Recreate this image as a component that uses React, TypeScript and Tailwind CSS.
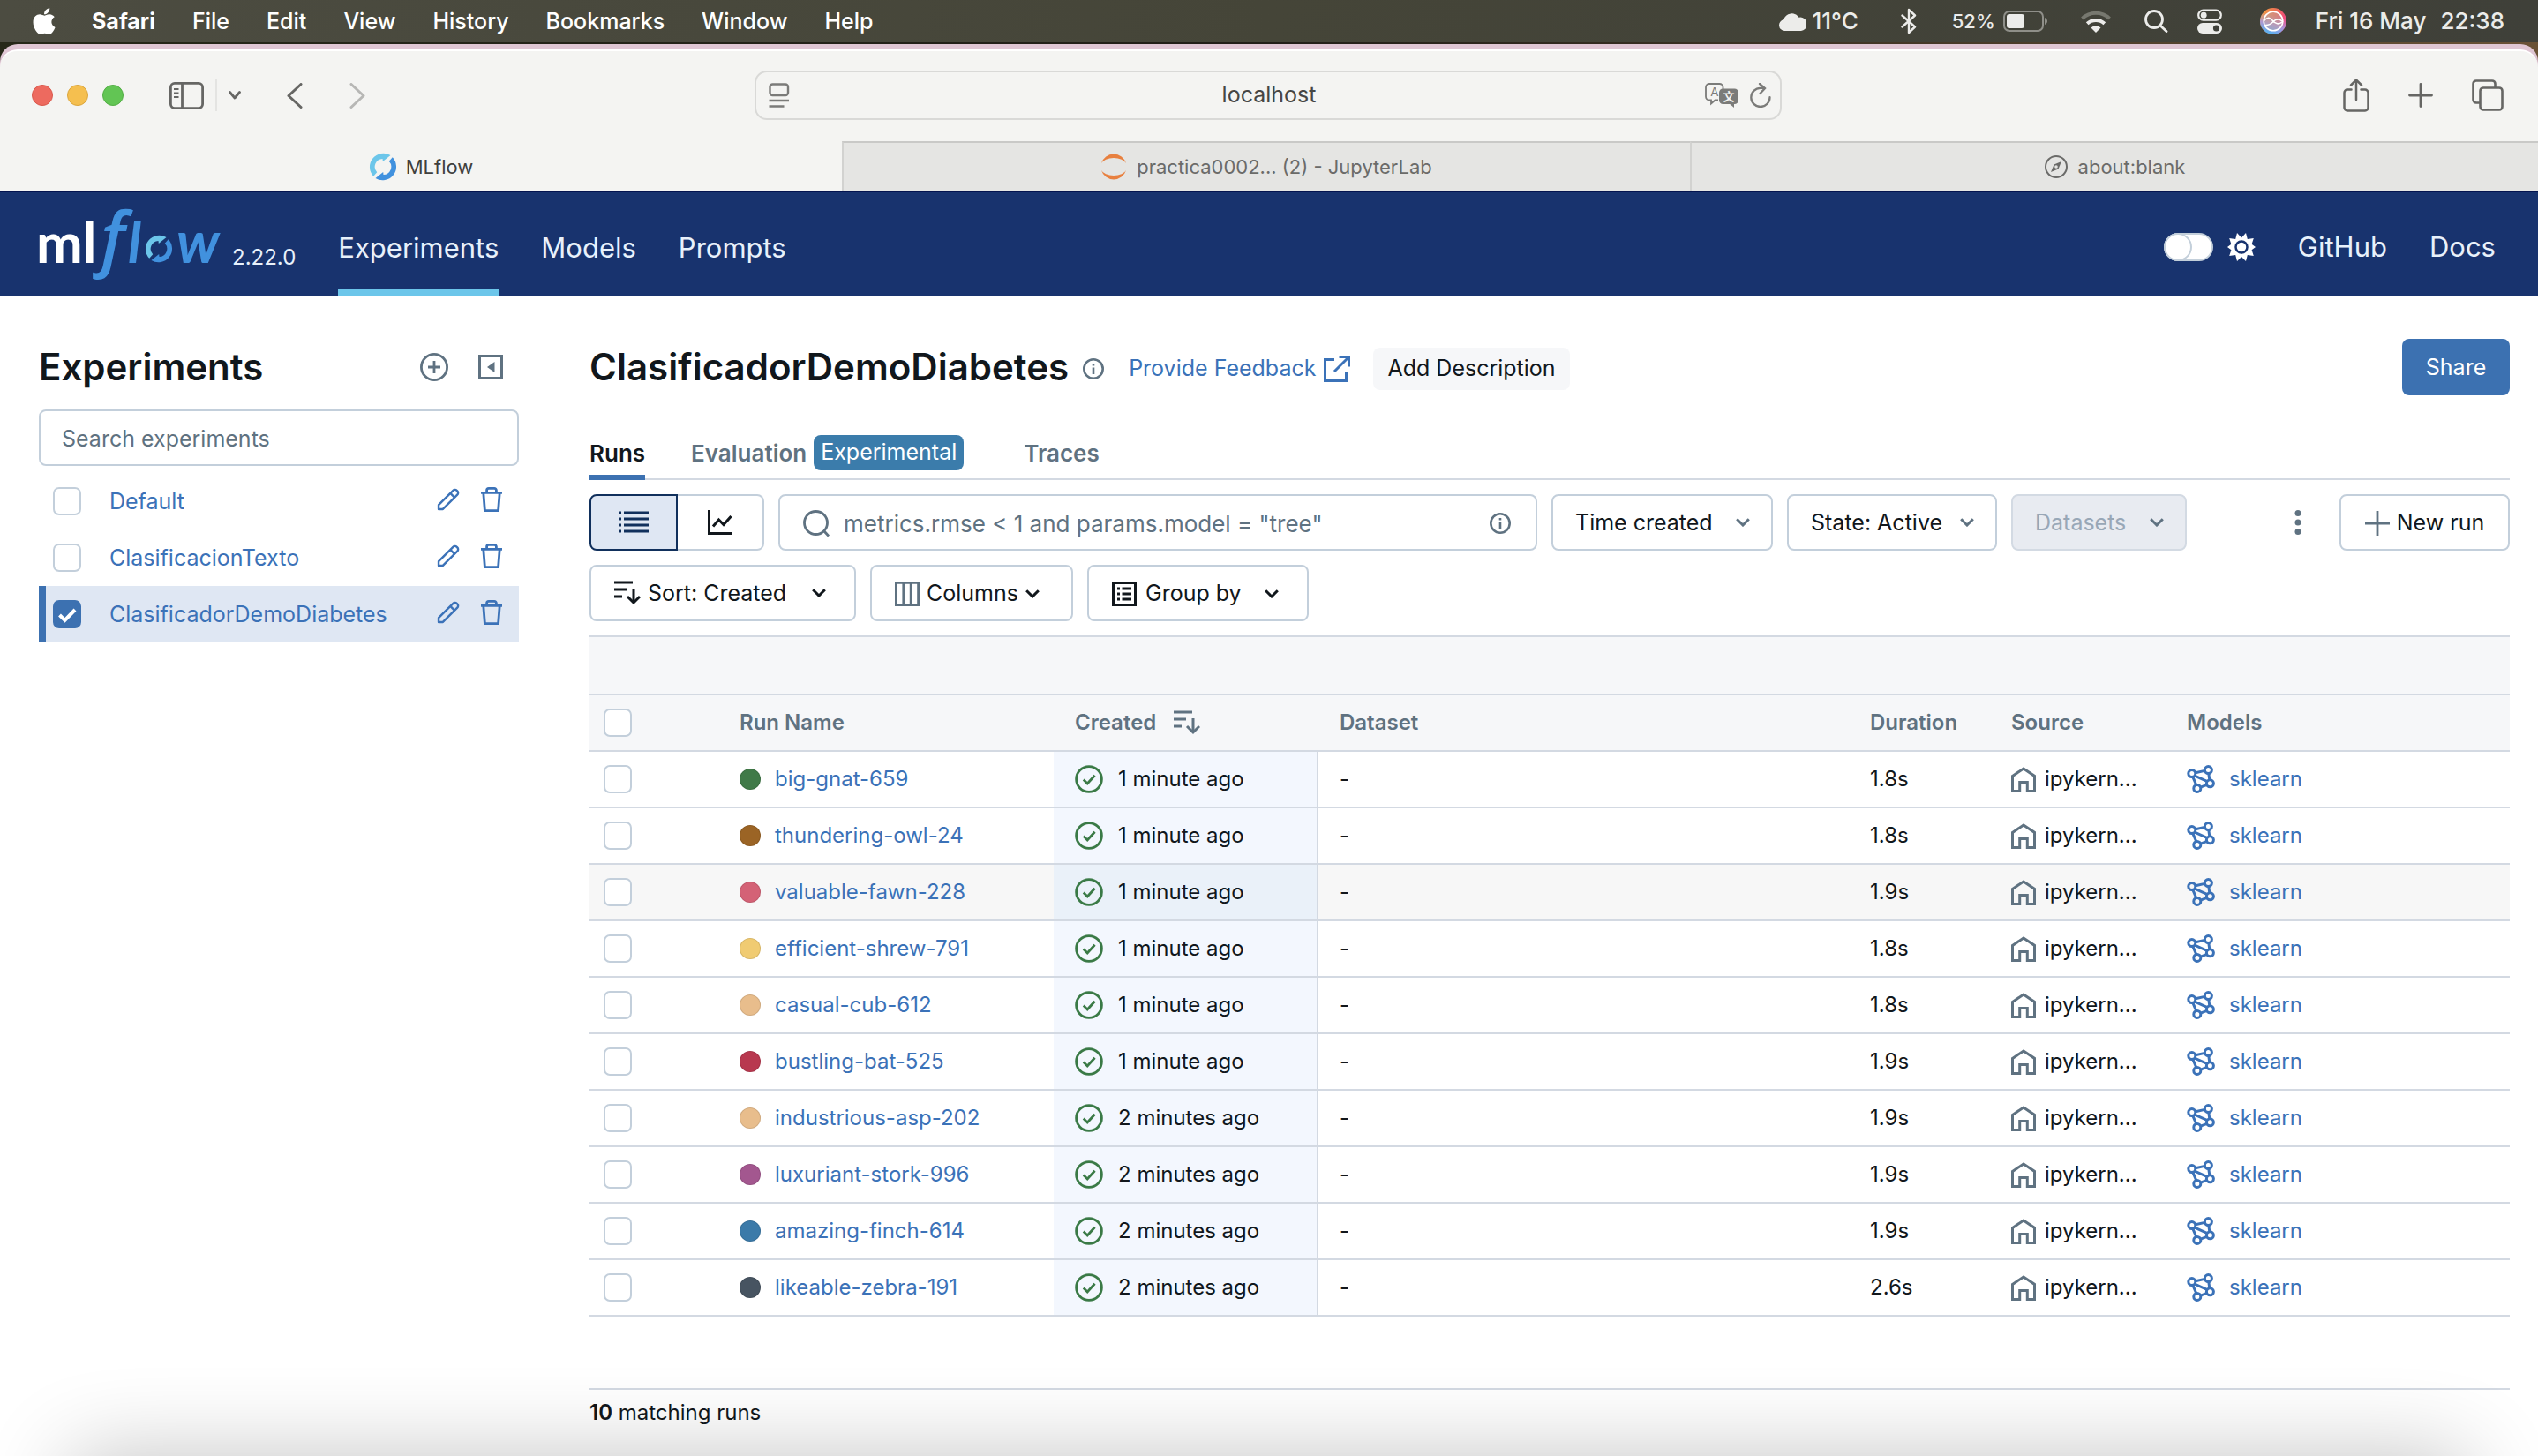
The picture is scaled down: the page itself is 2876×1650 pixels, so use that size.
import type { ReactNode } from "react";
import { FaApple } from "react-icons/fa";

type IconProps = { className?: string };

const Chevron = ({ className = "text-[#5f7281]" }: IconProps) => (
  <svg viewBox="0 0 16 10" className={`h-[10px] w-4 shrink-0 ${className}`} fill="none" stroke="currentColor" strokeWidth="3">
    <path d="M1.2 1.2 8 8l6.8-6.8" />
  </svg>
);

const InfoIcon = ({ className = "" }: IconProps) => (
  <svg viewBox="0 0 24 24" className={`size-6 shrink-0 text-[#5f7281] ${className}`} fill="none" stroke="currentColor" strokeWidth="2.6">
    <circle cx="12" cy="12" r="10.7" />
    <path d="M12 10.5V18M12 6v2.6" />
  </svg>
);

const PencilIcon = () => (
  <svg viewBox="0 0 28 28" className="size-[26px]" fill="none" stroke="currentColor" strokeWidth="2.6" strokeLinejoin="round">
    <path d="M2.2 25.8v-5.2L19.8 3a3.2 3.2 0 0 1 4.6 0l.6.6a3.2 3.2 0 0 1 0 4.6L7.4 25.8Z" />
    <path d="m16.5 6.4 5.2 5.2" />
  </svg>
);

const TrashIcon = () => (
  <svg viewBox="0 0 26 30" className="h-[30px] w-[26px]" fill="none" stroke="currentColor" strokeWidth="2.8">
    <path d="M1 7.4h24M7.6 7V4.6a2.2 2.2 0 0 1 2.2-2.2h6.4a2.2 2.2 0 0 1 2.2 2.2V7M3.8 7.6l1.6 20h15.2l1.6-20" />
  </svg>
);

const SortIcon = () => (
  <svg viewBox="0 0 30 28" className="h-7 w-[30px] shrink-0" fill="none" stroke="currentColor" strokeWidth="3">
    <path d="M0 2h21M0 10h14M0 18h9M22 9v15.5" />
    <path d="m15 18 7 7 7-7" />
  </svg>
);

const CheckCircle = () => (
  <svg viewBox="0 0 16 16" className="size-8 shrink-0 text-[#3a7a46]" fill="none" stroke="currentColor" strokeWidth="1.4">
    <circle cx="8" cy="8" r="7.2" />
    <path d="m4.9 8.3 2.2 2.2 4.2-4.6" />
  </svg>
);

const HomeIcon = () => (
  <svg viewBox="0 0 28 29" className="h-[29px] w-7 shrink-0 text-[#5f7281]" fill="none" stroke="currentColor" strokeWidth="3">
    <path d="M1.5 10.4 14 2l12.5 8.4v17H18.3V17.5H9.7v9.9H1.5Z" />
  </svg>
);

const ModelIcon = () => (
  <svg viewBox="0 0 16 16" className="size-8 shrink-0" fill="none" stroke="currentColor" strokeWidth="1.5">
    <circle cx="2.9" cy="4.8" r="2" />
    <circle cx="12.2" cy="2.8" r="2" />
    <circle cx="13.2" cy="10.4" r="2" />
    <circle cx="5.9" cy="13.2" r="2" />
    <path d="m4.9 4.4 5.3-1.2M12.4 4.8l.5 3.6M11.5 11.2l-3.7 1.4M3.4 6.7l2 4.6M4.5 6.1l7.2 3.2" />
  </svg>
);

const SwirlPaths = () => (
  <>
    <path fill="#6cc6ea" d="M5.2 26.8A15.5 15.5 0 0 1 24.5 2.9L15.8 9.9 15.5 7A9 9 0 0 0 9.2 22.2Z" />
    <path fill="#4191de" d="M26.8 5.2A15.5 15.5 0 0 1 7.5 29.1l8.7-7 .3 2.9A9 9 0 0 0 22.8 9.8Z" />
  </>
);

function MenuBar() {
  return (
    <nav className="flex h-12 items-center bg-linear-to-r from-[#4c4c41] via-[#454538] to-[#3f4039] pr-[38px] pl-9 text-[26px] leading-none font-medium text-white">
      <FaApple className="h-[34px] w-[28px]" />
      <div className="ml-10 flex grow items-center gap-[42px] text-[25px]">
        <b className="font-bold">Safari</b>
        {["File", "Edit", "View", "History", "Bookmarks", "Window", "Help"].map((m) => (
          <span key={m}>{m}</span>
        ))}
      </div>
      <div className="flex items-center text-[#ececea]">
        <svg viewBox="0 0 31 21" className="mr-[7px] h-[21px] w-[31px]" fill="currentColor">
          <path d="M6.5 21a6.4 6.4 0 0 1-1.2-12.7A9.5 9.5 0 0 1 22.5 5.8 7.7 7.7 0 1 1 23.5 21Z" />
        </svg>
        <span>11°C</span>
        <svg viewBox="0 0 18 30" className="ml-12 h-[30px] w-[18px]" fill="none" stroke="currentColor" strokeWidth="2.4" strokeLinejoin="round" strokeLinecap="round">
          <path d="m1.5 8.5 14.5 13L9 28V2l7 6.5-14.5 13" />
        </svg>
        <span className="ml-10 text-[22px]">52%</span>
        <svg viewBox="0 0 50 24" className="ml-[9px] h-6 w-[50px]">
          <rect x="1" y="1" width="44" height="22" rx="6" fill="none" stroke="#8f8f89" strokeWidth="2" />
          <rect x="4" y="4" width="20" height="16" rx="3" fill="#ececea" />
          <path d="M47 8c4 1.5 4 6.5 0 8Z" fill="#8f8f89" />
        </svg>
        <svg viewBox="0 0 34 25" className="ml-[38px] h-[25px] w-[34px]" fill="none" strokeWidth="4">
          <path d="M1.5 9a22.5 22.5 0 0 1 31 0" stroke="#77786f" />
          <path d="M7.2 14.8a14.5 14.5 0 0 1 19.6 0" stroke="#ececea" />
          <path d="m17 25-5.5-5.6a8 8 0 0 1 11 0Z" fill="#ececea" />
        </svg>
        <svg viewBox="0 0 27 26" className="ml-[38px] h-[26px] w-[27px]" fill="none" stroke="currentColor" strokeWidth="2.8" strokeLinecap="round">
          <circle cx="11" cy="11" r="9.5" />
          <path d="m18.2 18.2 6.8 6.3" />
        </svg>
        <svg viewBox="0 0 28 28" className="ml-[33px] size-7">
          <rect x="1.2" y="1.7" width="25.6" height="11" rx="5.5" fill="none" stroke="#ececea" strokeWidth="2.2" />
          <circle cx="7.2" cy="7.2" r="3.4" fill="#ececea" />
          <rect x="0" y="16" width="28" height="12" rx="6" fill="#ececea" />
          <circle cx="21.5" cy="22" r="3.6" fill="#3f4039" />
        </svg>
        <svg viewBox="0 0 30 30" className="ml-[43px] size-[30px]">
          <defs>
            <linearGradient id="siri-ring" x1="0" y1="0.2" x2="1" y2="0.5">
              <stop offset="0" stopColor="#f0a040" />
              <stop offset="0.6" stopColor="#ee6a5a" />
              <stop offset="1" stopColor="#f0428a" />
            </linearGradient>
            <linearGradient id="siri-base" x1="0.6" y1="0.3" x2="0.4" y2="1">
              <stop offset="0" stopColor="#a9a0d8" stopOpacity="0" />
              <stop offset="0.5" stopColor="#a79be0" stopOpacity="0.9" />
              <stop offset="1" stopColor="#4db4f5" />
            </linearGradient>
          </defs>
          <circle cx="15" cy="15" r="15" fill="url(#siri-ring)" />
          <circle cx="15" cy="15" r="15" fill="url(#siri-base)" />
          <circle cx="15" cy="15" r="10.8" fill="#b9a9a8" fillOpacity="0.45" stroke="#fff" strokeWidth="1.6" />
          <path d="M4.5 14.5c4-5 7-3.5 10 0s6.5 5 11 1c-4-4-7-3.5-10.5 0s-6 4.5-9.5 4" fill="none" stroke="#fff" strokeWidth="1.6" />
        </svg>
        <span className="ml-[33px]">Fri 16 May</span>
        <span className="ml-4">22:38</span>
      </div>
    </nav>
  );
}

function SafariChrome() {
  return (
    <div className="bg-linear-to-r from-[#262818] via-[#221f18] to-[#6a5236] pt-0.5">
      <div className="rounded-t-[20px] bg-[#dfc6d3] pt-1.5">
        <div className="rounded-t-[20px] border-t-2 border-white bg-[#f4f4f2]">
          <div className="flex h-[102px] items-center pr-[39px] pb-0.5 pl-9 text-[#666664]">
            <div className="flex flex-1 items-center">
              <div className="flex gap-4">
                <i className="size-6 rounded-full border border-[#d9594d] bg-[#ed6a5f]" />
                <i className="size-6 rounded-full border border-[#dba63e] bg-[#f5bf4f]" />
                <i className="size-6 rounded-full border border-[#54ae46] bg-[#62c554]" />
              </div>
              <button aria-label="Sidebar" className="ml-[52px]">
                <svg viewBox="0 0 39 31" className="h-[31px] w-[39px]" fill="none" stroke="currentColor" strokeWidth="2.8">
                  <rect x="1.4" y="1.4" width="36.2" height="28.2" rx="4.5" />
                  <path d="M14.5 1.5v28" />
                  <path d="M5 8h5.5M5 12.5h5.5M5 17h5.5" strokeWidth="2" />
                </svg>
              </button>
              <i className="ml-[13px] h-9 w-0.5 bg-[#e4e4e2]" />
              <svg viewBox="0 0 14 10" className="ml-[13px] h-[10px] w-[14px]" fill="none" stroke="currentColor" strokeWidth="2.8" strokeLinecap="round" strokeLinejoin="round">
                <path d="m1.5 1.5 5.5 6.5 5.5-6.5" />
              </svg>
              <button aria-label="Back" className="ml-[52px]">
                <svg viewBox="0 0 18 29" className="h-[29px] w-[18px]" fill="none" stroke="currentColor" strokeWidth="3" strokeLinecap="round" strokeLinejoin="round">
                  <path d="M16 1.5 2 14.5l14 13" />
                </svg>
              </button>
              <button aria-label="Forward" className="ml-[53px] text-[#b7b7b5]">
                <svg viewBox="0 0 18 29" className="h-[29px] w-[18px]" fill="none" stroke="currentColor" strokeWidth="3" strokeLinecap="round" strokeLinejoin="round">
                  <path d="m2 1.5 14 13-14 13" />
                </svg>
              </button>
            </div>
            <div className="flex h-14 w-[1164px] items-center rounded-[14px] border-2 border-[#d9d9d7] pr-[10px] pl-[14px] text-[#7b7b79]">
              <svg viewBox="0 0 24 28" className="h-7 w-6" fill="none" stroke="currentColor" strokeWidth="2.4">
                <rect x="1.5" y="1.5" width="20.5" height="12.5" rx="3" />
                <path d="M.5 20h22.5M.5 26.5h17" />
              </svg>
              <input aria-label="Address" defaultValue="localhost" className="min-w-0 grow pl-[50px] text-center text-[25px] text-[#464644] outline-none" />
              <svg viewBox="0 0 38 28" className="h-7 w-[38px]">
                <path d="M15 19.5h-3.5L7 23.5v-4H5A4 4 0 0 1 1 15.5V5a4 4 0 0 1 4-4h11.5a4 4 0 0 1 4 4v2" fill="none" stroke="currentColor" strokeWidth="1.8" />
                <rect x="16" y="6.5" width="22" height="17.5" rx="4.5" fill="currentColor" />
                <path d="M27 23h6v5Z" fill="currentColor" />
                <text x="6.3" y="14.5" fontSize="13.5" fill="currentColor" fontFamily="Inter">A</text>
                <text x="20.5" y="20" fontSize="13" fontWeight="700" fill="#f4f4f2" fontFamily="Noto Sans CJK SC">文</text>
              </svg>
              <button aria-label="Reload" className="ml-[13px]">
                <svg viewBox="0 0 24 28" className="h-7 w-6" fill="none" stroke="currentColor" strokeWidth="2.3" strokeLinecap="round">
                  <path d="M22.5 16.2A10.6 10.6 0 1 1 12 5.8h4.5M11 1l6 5-5.5 6" />
                </svg>
              </button>
            </div>
            <div className="flex flex-1 items-center justify-end">
              <button aria-label="Share page">
                <svg viewBox="0 0 30 38" className="h-[38px] w-[30px]" fill="none" stroke="currentColor" strokeWidth="2.5" strokeLinecap="round">
                  <path d="M9.5 12.5H5a3.5 3.5 0 0 0-3.5 3.5v17A3.5 3.5 0 0 0 5 36.5h20a3.5 3.5 0 0 0 3.5-3.5V16a3.5 3.5 0 0 0-3.5-3.5h-4.5M15 24V2M9 7.5l6-6 6 6" />
                </svg>
              </button>
              <button aria-label="New tab" className="ml-[44px]">
                <svg viewBox="0 0 28 28" className="size-7" fill="none" stroke="currentColor" strokeWidth="2.8" strokeLinecap="round">
                  <path d="M14 1.5v25M1.5 14h25" />
                </svg>
              </button>
              <button aria-label="Tab overview" className="ml-[44px]">
                <svg viewBox="0 0 36 36" className="size-9" fill="none" stroke="currentColor" strokeWidth="2.6">
                  <path d="M9.5 26.5H5A3.5 3.5 0 0 1 1.5 23V5A3.5 3.5 0 0 1 5 1.5h18A3.5 3.5 0 0 1 26.5 5v4.5" />
                  <rect x="9.5" y="9.5" width="25" height="25" rx="3.5" />
                </svg>
              </button>
            </div>
          </div>
          <div className="grid h-14 grid-cols-[954fr_961fr_961fr] text-[22px] leading-none text-[#6b6b69]">
            <div className="flex items-center justify-center gap-[10px] pt-0.5 text-[#3f3f3d]">
              <svg viewBox="0 0 32 32" className="size-8"><SwirlPaths /></svg>
              MLflow
            </div>
            {["practica0002... (2) - JupyterLab", "about:blank"].map((t, i) => (
              <div key={t} className="flex items-center justify-center gap-3 border-t-2 border-l-2 border-t-[#c9c9c7] border-l-[#d2d2d0] bg-[#e5e5e3]">
                {i === 0 ? (
                  <svg viewBox="0 0 28 30" className="h-[30px] w-7" fill="#e8803f">
                    <path d="M0 11A14.6 14.6 0 0 1 28 11 14.5 8 0 0 0 0 11ZM0 19A14.6 14.6 0 0 0 28 19 14.5 8 0 0 1 0 19Z" />
                  </svg>
                ) : (
                  <svg viewBox="0 0 26 26" className="size-[26px]" fill="none" stroke="currentColor" strokeWidth="2">
                    <circle cx="13" cy="13" r="12" />
                    <path d="m19 7-3.5 8.5L7 19l3.5-8.5Z" fill="currentColor" stroke="none" />
                    <circle cx="13" cy="13" r="1.8" fill="#e5e5e3" stroke="none" />
                  </svg>
                )}
                {t}
              </div>
            ))}
          </div>
        </div>
      </div>
    </div>
  );
}

function MlflowHeader() {
  return (
    <header className="flex h-[120px] items-stretch border-t-2 border-[#04144f] bg-[#18336e] pr-12 pl-10 text-[31px] text-[#e8f1fb]">
      <a href="#home" aria-label="MLflow home">
        <svg viewBox="0 0 216 118" className="h-[118px] w-[216px] overflow-visible" fontFamily="Lato">
          <text x="1" y="80" fontSize="63" fontWeight="700" fill="#fff">ml</text>
          <text x="74" y="80" fontSize="80" fontStyle="italic" fontWeight="600" fontFamily="Open Sans" fill="#4191de">f</text>
          <text x="105" y="80" fontSize="63" fontStyle="italic" fontWeight="700" fill="#4191de">l</text>
          <text x="160" y="80" fontSize="66" fontStyle="italic" fontWeight="700" fill="#4191de">w</text>
          <svg x="124" y="48" width="32" height="32" viewBox="0 0 32 32"><SwirlPaths /></svg>
        </svg>
      </a>
      <span className="mt-[58px] ml-[7px] text-2xl leading-8">2.22.0</span>
      <nav className="ml-12 flex gap-12">
        <a href="#experiments" className="flex items-center border-b-8 border-[#6cc6ea] pt-4">Experiments</a>
        <a href="#models" className="flex items-center pt-2">Models</a>
        <a href="#prompts" className="flex items-center pt-2">Prompts</a>
      </nav>
      <div className="ml-auto flex items-center pt-1.5">
        <button role="switch" aria-checked="false" aria-label="Dark theme" className="flex h-8 w-14 rounded-full border-2 border-[#c3cfda] bg-white">
          <i className="-my-0.5 -ml-0.5 size-8 rounded-full border-2 border-[#c3cfda] bg-white" />
        </button>
        <svg viewBox="0 0 32 32" className="ml-4 size-8">
          <path fill="#fff" d="m16 5.5 5-5.5 1.8 7 7-.9-2.2 6.7L32 16l-4.4 3.2 2.2 6.7-7-.9L21 32l-5-5-5 5-1.8-7-7 .9 2.2-6.7L0 16l4.4-3.2L2.2 6.1l7 .9L11 0Z" />
          <circle cx="16" cy="16" r="6.5" fill="#fff" stroke="#18336e" strokeWidth="2.5" />
        </svg>
        <a href="#github" className="ml-12">GitHub</a>
        <a href="#docs" className="ml-12">Docs</a>
      </div>
    </header>
  );
}

const experiments = ["Default", "ClasificacionTexto", "ClasificadorDemoDiabetes"];

function Checkbox({ label, checked = false }: { label: string; checked?: boolean }) {
  return (
    <span className="relative flex size-8 shrink-0">
      <input
        type="checkbox"
        aria-label={label}
        defaultChecked={checked}
        className="peer size-8 appearance-none rounded-[7px] border-2 border-[#c3cfdb] bg-white checked:border-[#3c71b1] checked:bg-[#3c71b1]"
      />
      <svg viewBox="0 0 32 32" className="pointer-events-none absolute inset-0 hidden size-8 peer-checked:block" fill="none" stroke="#fff" strokeWidth="4">
        <path d="m7.5 17 6 6 11.5-12" />
      </svg>
    </span>
  );
}

function Sidebar() {
  return (
    <aside className="w-[544px] shrink-0">
      <div className="flex h-16 items-center">
        <h2 className="grow text-[42px] leading-none font-semibold">Experiments</h2>
        <button aria-label="New experiment" className="text-[#5f7281]">
          <svg viewBox="0 0 32 32" className="size-8" fill="none" stroke="currentColor" strokeWidth="2.8">
            <circle cx="16" cy="16" r="14.6" />
            <path d="M16 9v14M9 16h14" />
          </svg>
        </button>
        <button aria-label="Hide experiments" className="mr-[18px] ml-[34px] text-[#5f7281]">
          <svg viewBox="0 0 28 28" className="size-7" fill="none" stroke="currentColor" strokeWidth="3">
            <path d="M1.5 1.5h25v25h-25Z" />
            <path d="M18.5 8v12L10 14Z" fill="currentColor" stroke="none" />
          </svg>
        </button>
      </div>
      <input
        aria-label="Search experiments"
        placeholder="Search experiments"
        className="mt-4 h-16 w-full rounded-lg border-2 border-[#c3cfdb] px-6 pt-0.5 text-[25px] placeholder:text-[#5f7281]"
      />
      <ul className="mt-2">
        {experiments.map((e, i) => {
          const active = i === 2;
          return (
            <li
              key={e}
              className={`flex h-16 items-center border-l-8 pr-[18px] pl-2 text-[#3b72b8] ${active ? "border-[#3c71b1] bg-[#dfe7f3]" : "border-transparent"}`}
            >
              <Checkbox label={`Select ${e}`} checked={active} />
              <a href={`#${e}`} className="ml-8 grow pt-0.5 text-[25px]">{e}</a>
              <span className="flex items-center gap-[23px] pb-1">
                <button aria-label={`Rename ${e}`}><PencilIcon /></button>
                <button aria-label={`Delete ${e}`}><TrashIcon /></button>
              </span>
            </li>
          );
        })}
      </ul>
    </aside>
  );
}

function Dropdown({ label, value, className, disabled = false, children }: { label: string; value: string; className: string; disabled?: boolean; children?: ReactNode }) {
  return (
    <div className={`relative flex h-16 items-center ${className}`}>
      <span className="pointer-events-none absolute left-7">{children}</span>
      <select
        aria-label={label}
        disabled={disabled}
        className={`h-full w-full appearance-none rounded-lg border-2 border-[#c3cfdb] bg-white pt-0.5 text-[25px] opacity-100 disabled:border-[#d3dae3] disabled:bg-[#e8ebf1] disabled:text-[#98a7b7] ${children ? "pl-[64px]" : "pl-[25px]"}`}
      >
        <option>{value}</option>
      </select>
      <Chevron className={`pointer-events-none absolute ${children ? "right-[34px] text-[#11171c]" : "right-[26px] text-[#5f7281]"}`} />
    </div>
  );
}

const outlined = "flex h-16 items-center rounded-lg border-2 border-[#c3cfdb]";

function Toolbar() {
  return (
    <>
      <div className="mt-4 flex items-center gap-4">
        <div className="flex w-[198px]">
          <button aria-label="Table view" className="flex h-16 w-[100px] items-center justify-center rounded-l-lg border-2 border-[#11305c] bg-[#dfe7f3] text-[#11305c]">
            <svg viewBox="0 0 34 26" className="h-[26px] w-[34px]" fill="none" stroke="currentColor" strokeWidth="3">
              <path d="M0 2h3M0 9h3M0 16h3M0 23h3M6 2h28M6 9h28M6 16h28M6 23h28" />
            </svg>
          </button>
          <button aria-label="Chart view" className="flex h-16 grow items-center justify-center rounded-r-lg border-2 border-l-0 border-[#c3cfdb]">
            <svg viewBox="0 0 28 28" className="size-7" fill="none" stroke="currentColor" strokeWidth="3">
              <path d="M1.5 0v26.5H28M6 18.5l6.5-7.5 5.5 5.5L26.5 7" />
            </svg>
          </button>
        </div>
        <div className={`${outlined} w-[860px] pr-7 pl-[26px] pt-0.5`}>
          <svg viewBox="0 0 30 30" className="size-[30px] shrink-0 text-[#5f7281]" fill="none" stroke="currentColor" strokeWidth="2.8">
            <circle cx="14.5" cy="14.5" r="13" />
            <path d="m23.5 23.5 5.5 6" />
          </svg>
          <input
            aria-label="Filter runs"
            placeholder={'metrics.rmse < 1 and params.model = "tree"'}
            className="ml-4 min-w-0 grow text-[26px] outline-none placeholder:text-[#5f7281]"
          />
          <InfoIcon />
        </div>
        <Dropdown label="Time created" value="Time created" className="w-[251px]" />
        <Dropdown label="State" value="State: Active" className="w-[238px]" />
        <Dropdown label="Datasets" value="Datasets" className="w-[199px]" disabled />
        <button aria-label="More options" className="ml-auto text-[#5f7281]">
          <svg viewBox="0 0 8 28" className="h-7 w-2" fill="currentColor">
            <circle cx="4" cy="3.5" r="3.5" />
            <circle cx="4" cy="14" r="3.5" />
            <circle cx="4" cy="24.5" r="3.5" />
          </svg>
        </button>
        <button className={`${outlined} ml-[27px] w-[193px] justify-center gap-2 pt-0.5 text-[25px]`}>
          <svg viewBox="0 0 28 28" className="size-7 text-[#5f7281]" fill="none" stroke="currentColor" strokeWidth="2.8">
            <path d="M14 0v28M0 14h28" />
          </svg>
          New run
        </button>
      </div>
      <div className="mt-4 flex gap-4">
        <Dropdown label="Sort" value="Sort: Created" className="w-[302px]"><SortIcon /></Dropdown>
        <button className={`${outlined} w-[230px] gap-2 pt-0.5 pl-[26px] text-[25px]`}>
          <svg viewBox="0 0 28 28" className="size-7 text-[#5f7281]" fill="none" stroke="currentColor" strokeWidth="2.8">
            <path d="M1.4 1.4h25.2v25.2H1.4ZM9.8 1v26M18.2 1v26" />
          </svg>
          Columns
          <Chevron className="text-[#11171c]" />
        </button>
        <button className={`${outlined} w-[251px] gap-[10px] pt-0.5 pl-[26px] text-[25px]`}>
          <svg viewBox="0 0 28 28" className="size-7" fill="none" stroke="currentColor" strokeWidth="3">
            <path d="M1.5 1.5h25v25h-25Z" />
            <path d="M6 8h3M6 14h3M6 20h3M11.5 8H22M11.5 14H22M11.5 20H22" />
          </svg>
          Group by
          <Chevron className="ml-4 text-[#11171c]" />
        </button>
      </div>
    </>
  );
}

const runs = [
  { name: "big-gnat-659", color: "#407a48", age: "1 minute ago", duration: "1.8s" },
  { name: "thundering-owl-24", color: "#9b6425", age: "1 minute ago", duration: "1.8s" },
  { name: "valuable-fawn-228", color: "#d46276", age: "1 minute ago", duration: "1.9s" },
  { name: "efficient-shrew-791", color: "#f0cb72", age: "1 minute ago", duration: "1.8s" },
  { name: "casual-cub-612", color: "#e8bd8c", age: "1 minute ago", duration: "1.8s" },
  { name: "bustling-bat-525", color: "#b8384f", age: "1 minute ago", duration: "1.9s" },
  { name: "industrious-asp-202", color: "#e8bd8c", age: "2 minutes ago", duration: "1.9s" },
  { name: "luxuriant-stork-996", color: "#a3578f", age: "2 minutes ago", duration: "1.9s" },
  { name: "amazing-finch-614", color: "#3b7aa9", age: "2 minutes ago", duration: "1.9s" },
  { name: "likeable-zebra-191", color: "#475461", age: "2 minutes ago", duration: "2.6s" },
];

function RunsTable() {
  return (
    <div className="mt-4 border-t-2 border-[#d3d9e2]">
      <div className="h-16 bg-[#f6f7f9]" />
      <table className="w-full table-fixed border-separate border-spacing-0 text-left text-2xl">
        <colgroup>
          <col className="w-[170px]" />
          <col className="w-[356px]" />
          <col className="w-[300px]" />
          <col className="w-[625px]" />
          <col className="w-40" />
          <col className="w-[199px]" />
          <col />
        </colgroup>
        <thead>
          <tr className="bg-[#f6f7f9] text-[#5f7281] [&>th]:h-[66px] [&>th]:border-y-2 [&>th]:border-[#d3d9e2] [&>th]:font-semibold">
            <th className="pl-4"><Checkbox label="Select all runs" /></th>
            <th>Run Name</th>
            <th className="pl-6"><span className="flex items-center gap-5">Created <SortIcon /></span></th>
            <th className="pl-6">Dataset</th>
            <th>Duration</th>
            <th>Source</th>
            <th>Models</th>
          </tr>
        </thead>
        <tbody>
          {runs.map((r, i) => (
            <tr key={r.name} className={`[&>td]:h-16 [&>td]:border-b-2 [&>td]:border-b-[#d3d9e2] ${i === 2 ? "bg-[#f7f7f7]" : ""}`}>
              <td className="pl-4"><Checkbox label={`Select ${r.name}`} /></td>
              <td>
                <a href={`#${r.name}`} className="flex items-center gap-4 text-[#3b72b8]">
                  <i className="size-6 rounded-full border border-black/10" style={{ backgroundColor: r.color }} />
                  {r.name}
                </a>
              </td>
              <td className={`border-r-2 border-r-[#d3d9e2] pl-6 ${i === 2 ? "bg-[#eaf1f9]" : "bg-[#f3f7fe]"}`}>
                <span className="flex items-center gap-[17px]"><CheckCircle />{r.age}</span>
              </td>
              <td className="pl-6">-</td>
              <td>{r.duration}</td>
              <td><span className="flex items-center gap-[10px]"><HomeIcon />ipykern...</span></td>
              <td><a href="#model" className="flex items-center gap-4 text-[#3b72b8]"><ModelIcon />sklearn</a></td>
            </tr>
          ))}
        </tbody>
      </table>
    </div>
  );
}

export default function App() {
  return (
    <div className="relative flex min-h-screen flex-col overflow-hidden bg-white font-['Inter',sans-serif] text-[#11171c]">
      <MenuBar />
      <SafariChrome />
      <MlflowHeader />
      <main className="flex gap-20 pt-12 pr-8 pl-11">
        <Sidebar />
        <section className="min-w-0 grow">
          <div className="flex h-16 items-center">
            <h1 className="text-[42px] leading-none font-semibold">ClasificadorDemoDiabetes</h1>
            <div className="mt-1 ml-4 flex items-center">
              <InfoIcon />
              <a href="#feedback" className="ml-7 flex items-center gap-[9px] text-[25px] text-[#3b72b8]">
                Provide Feedback
                <svg viewBox="0 0 30 30" className="size-[30px]" fill="none" stroke="currentColor" strokeWidth="3">
                  <path d="M12 4.5H1.5v24h24V18M17.5 1.5h11v11M28 2 12 18" />
                </svg>
              </a>
              <button className="ml-[26px] h-12 rounded-lg bg-[#f6f7f9] px-4 text-[25px]">Add Description</button>
            </div>
            <button className="ml-auto h-16 w-[122px] rounded-lg bg-[#3c71b1] pt-0.5 text-[25px] text-white">Share</button>
          </div>
          <div role="tablist" className="mt-8 flex h-16 items-stretch border-b-2 border-[#d3d9e2] text-[26px] font-semibold text-[#5f7281]">
            <button role="tab" aria-selected="true" className="-mb-0.5 border-b-[6px] border-[#3c71b1] pt-2 text-[#11171c]">Runs</button>
            <button role="tab" aria-selected="false" className="ml-[52px] flex items-center gap-2 pt-1">
              Evaluation
              <span className="flex h-10 items-center rounded-lg bg-[#3b7cab] px-2 text-[25px] font-normal text-white">Experimental</span>
            </button>
            <button role="tab" aria-selected="false" className="ml-[68px] pt-1">Traces</button>
          </div>
          <Toolbar />
          <RunsTable />
          <p className="mt-[81px] border-t-2 border-[#d3d9e2] pt-2 text-2xl leading-9">
            <b className="font-semibold">10</b> matching runs
          </p>
        </section>
      </main>
      <div className="pointer-events-none absolute top-full right-20 left-20 h-40 shadow-[0_0_100px_rgba(0,0,0,0.24)]" />
    </div>
  );
}
